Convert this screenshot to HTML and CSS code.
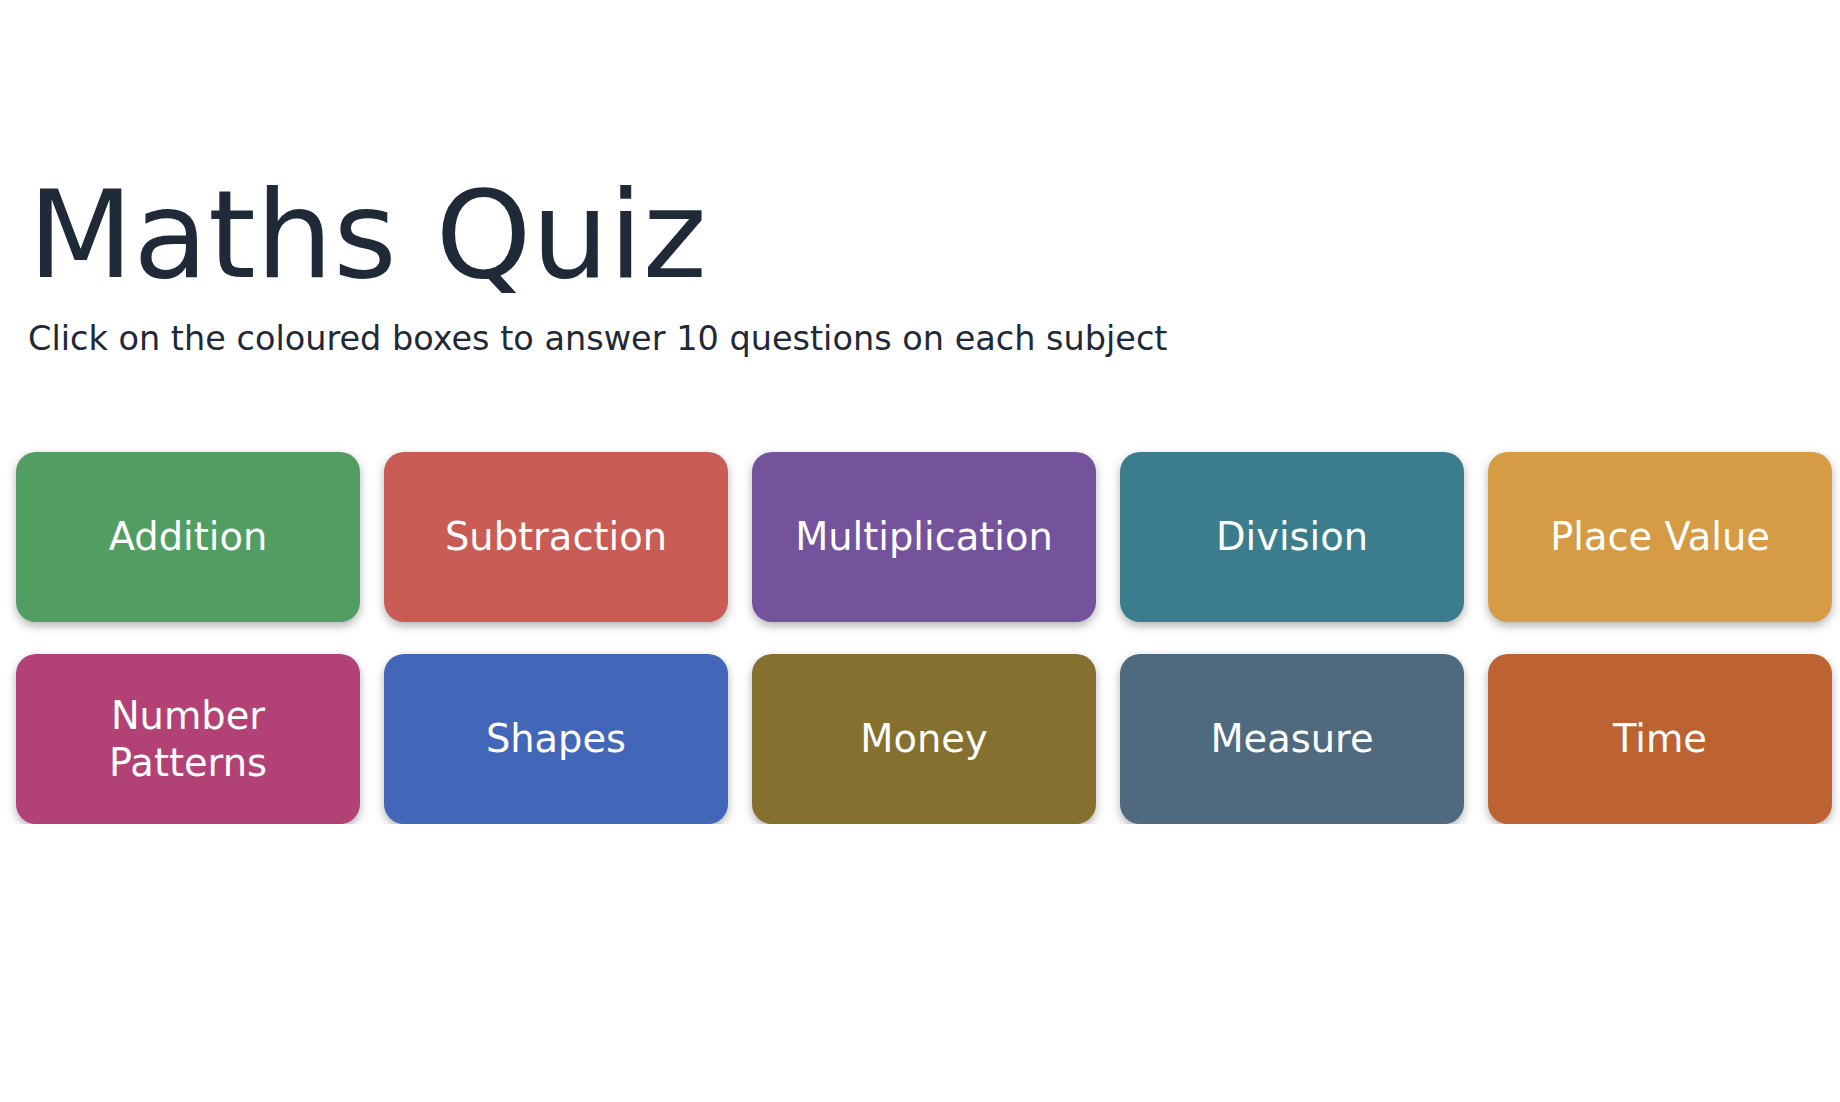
FILE: index.html
```html
<!DOCTYPE html>
<html lang='en'>
<head>
  <meta charset='UTF-8'>
  <title>Maths Quiz</title>
  <link rel="stylesheet" href="styles.css">
</head>
<body>
  <div class='intro'>
    <h1>Maths Quiz</h1>
    <p>Click on the coloured boxes to answer 10 questions on each subject</p>
  </div>
  <div class='subjects'>
    <a class='subject addition' href='#'>Addition</a>
    <a class='subject subtraction' href='#'>Subtraction</a>
    <a class='subject multiplication' href='#'>Multiplication</a>
    <a class='subject division' href='#'>Division</a>
    <a class='subject place-value' href='#'>Place Value</a>
    <a class='subject patterns' href='#'>Number Patterns</a>
    <a class='subject shapes' href='#'>Shapes</a>
    <a class='subject money' href='#'>Money</a>
    <a class='subject measure' href='#'>Measure</a>
    <a class='subject time' href='#'>Time</a>
  </div>
</body>
</html>
```

FILE: styles.css
```css
body {
  background-color: #fff;
  color: #1f2937;
  font-family: "DejaVu Sans", Verdana, sans-serif;
  margin: 0;
  padding: 0 8px 0 16px;
}

.intro {
  padding: 174px 12px 0 12px;
}

.intro h1 {
  font-size: 122px;
  font-weight: 400;
  line-height: 1;
  margin: 0;
}

.intro p {
  font-size: 33.5px;
  line-height: 1.2;
  margin: 23px 0 0 0;
}

.subjects {
  display: grid;
  grid-template-columns: repeat(5, 1fr);
  gap: 32px 24px;
  margin-top: 93px;
}

.subject {
  display: flex;
  align-items: center;
  justify-content: center;
  height: 170px;
  padding: 0 24px;
  box-sizing: border-box;
  border-radius: 20px;
  box-shadow: 0 4px 10px rgba(0, 0, 0, 0.3);
  color: #fff;
  font-size: 38.4px;
  line-height: 1.24;
  text-align: center;
  text-decoration: none;
}

.addition { background: #529d62; }
.subtraction { background: #c95c55; }
.multiplication { background: #74529c; }
.division { background: #3b7d8c; }
.place-value { background: #d59b45; }
.patterns { background: #b24175; }
.shapes { background: #4267b8; }
.money { background: #857030; }
.measure { background: #4f6a7f; }
.time { background: #bd6231; }
```
